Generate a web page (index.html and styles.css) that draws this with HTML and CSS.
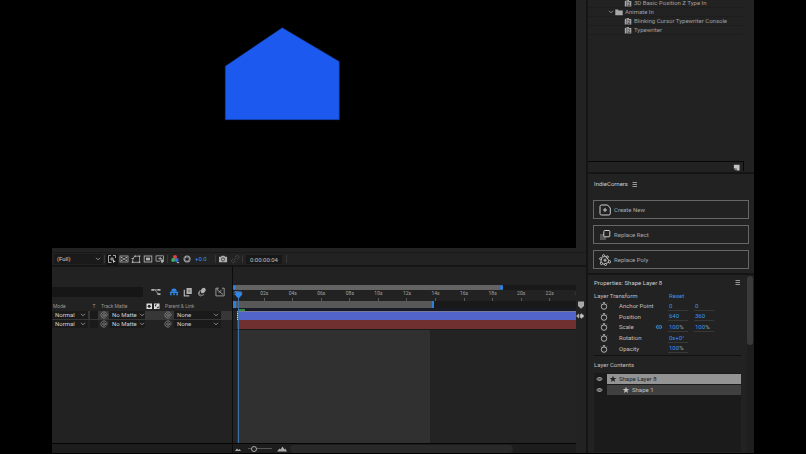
FILE: index.html
```html
<!DOCTYPE html>
<html lang="en">
<head>
<meta charset="utf-8">
<title>Composition</title>
<link rel="stylesheet" href="styles.css">
</head>
<body>
<svg class="defs" aria-hidden="true">
  <symbol id="chev" viewBox="0 0 6 4"><path d="M1 .8l2 2 2-2" fill="none" stroke="currentColor" stroke-width=".8"/></symbol>
  <symbol id="whip" viewBox="0 0 8 8"><path d="M5.3 4a1.3 1.3 0 1 1-1.3-1.3c.8 0 1.3.5 1.3 1.3 0 1.6 2 1.300 1.800-.3C6.900 2 5.600.9 4 .9a3.100 3.100 0 1 0 1.800 5.600" fill="none" stroke="currentColor" stroke-width=".8"/></symbol>
  <symbol id="watch" viewBox="0 0 8 8"><circle cx="4" cy="4.600" r="2.700" fill="none" stroke="currentColor" stroke-width=".9"/><path d="M2.800.7h2.400M4 .7v1.300M1 1.700l.9.9M7 1.700l-.9.9" fill="none" stroke="currentColor" stroke-width=".8"/></symbol>
  <symbol id="preset" viewBox="0 0 8 8"><path d="M.8 2.200L2.600 1v6.500H.8zM3.200 1h1.500l.6.900h2v5.600H3.200z" fill="currentColor"/><path d="M4 3.600c1.500-1 2.500.4 1 1.400L4.500 6.700h1.800" fill="none" stroke="#222" stroke-width=".7"/></symbol>
  <symbol id="eye" viewBox="0 0 8 6"><path d="M.8 3C2 .8 6 .8 7.200 3 6 5.200 2 5.200.8 3z" fill="none" stroke="currentColor" stroke-width=".9"/><circle cx="4" cy="3" r="1.100" fill="#1b1b1b" stroke="currentColor" stroke-width=".6"/></symbol>
  <symbol id="star" viewBox="0 0 8 8"><path d="M4 .8l.9 2.200 2.400.1-1.900 1.500.7 2.300L4 5.600 1.900 6.900l.7-2.300L.7 3.100 3.100 3z" fill="currentColor"/></symbol>
  <symbol id="menu" viewBox="0 0 6 6"><path d="M.5 1.500h4.500M.5 3.500h4.500M.5 5.500h4.500" stroke="currentColor" stroke-width=".7"/></symbol>
</svg>
<div class="app">
  <main class="left">
    <section class="stage">
      <svg class="artwork" viewBox="0 0 524 248" role="img" aria-label="Shape layer"><path d="M173.300 66.200L230.300 27.800 287.200 61.600V119.700H173.300z" fill="#1c59ee" stroke="#173fa0" stroke-width=".5"/></svg>
    </section>

    <div class="viewbar">
      <label class="pick resolution"><select aria-label="Resolution"><option>(Full)</option></select><svg class="chev"><use href="#chev"/></svg></label>
      <i class="sep"></i>
      <button class="ico pressed" aria-label="Fast preview"><svg viewBox="0 0 10 10"><path d="M4 1.500H1.500v7h3M6 1.500h2.500V4M3 5h4M5 3v4" fill="none" stroke="currentColor" stroke-width=".8"/><path d="M6 5.500v3.800l1-1.200h1.800z" fill="currentColor"/></svg></button>
      <button class="ico" aria-label="Transparency grid"><svg viewBox="0 0 10 10"><rect x="1" y="2" width="8" height="6" fill="none" stroke="currentColor" stroke-width=".8"/><path d="M2 3h1.500v1.300H2zM6.500 3H8v1.300H6.500zM3.700 4.300h2.600v1.500H3.700zM2 5.800h1.500v1.300H2zM6.500 5.800H8v1.300H6.500z" fill="currentColor"/></svg></button>
      <button class="ico" aria-label="Mask visibility"><svg viewBox="0 0 10 10"><path d="M1.500 8.300C1.700 5 2.500 2.600 4.200 2.200h4.300v6.100z" fill="none" stroke="currentColor" stroke-width=".8"/><path d="M.8 7.500h1.600v1.600H.8zM7.700 7.500h1.600v1.600H7.700zM7.700 1.400h1.600V3H7.700zM3.300 1.400h1.600V3H3.300zM.6 4h2v.9h-2z" fill="currentColor"/></svg></button>
      <button class="ico" aria-label="Region of interest"><svg viewBox="0 0 10 10"><rect x="1.200" y="2" width="7.600" height="6" fill="none" stroke="currentColor" stroke-width=".9"/><rect x="3" y="3.600" width="4" height="2.800" fill="currentColor"/></svg></button>
      <button class="ico" aria-label="Grid and guides"><svg viewBox="0 0 10 10"><path d="M1 1.800h7.500v4M1 1.800v5.400h4M3.200 4.500h4M5.200 2.800v4" fill="none" stroke="currentColor" stroke-width=".8"/><path d="M6 5.500h2.800v1.800L7 9.300 6 8z" fill="currentColor"/></svg></button>
      <i class="sep"></i>
      <button class="ico" aria-label="Show channel"><svg viewBox="0 0 10 10"><circle cx="5" cy="3" r="2" fill="#d8453c"/><circle cx="3.200" cy="6" r="2" fill="#3fae5a"/><circle cx="6.600" cy="6" r="2" fill="#3d6fe0"/><path d="M6.500 8h3L8 9.500z" fill="#bbb"/></svg></button>
      <button class="ico" aria-label="Reset exposure"><svg viewBox="0 0 10 10"><circle cx="5" cy="5" r="2.700" fill="none" stroke="currentColor" stroke-width="1.700"/><path d="M3.500 2L6.600 3.200M7 2.800l.2 3.200M8 6L5.500 7.600M5 8.300L3 6M2 6l.6-3" stroke="#222" stroke-width=".4"/></svg></button>
      <button class="value exposure">+0.0</button>
      <i class="sep"></i>
      <button class="ico" aria-label="Take snapshot"><svg viewBox="0 0 10 10"><path d="M1 2.800h2l.8-1.100h2.500l.8 1.100h2v5.500H1z" fill="currentColor"/><circle cx="5" cy="5.400" r="1.600" fill="none" stroke="#222" stroke-width=".7"/></svg></button>
      <button class="ico dim" aria-label="Show snapshot"><svg viewBox="0 0 10 10"><path d="M5 3l1-1c2-1.500 4 .5 2.500 2.300l-1.200 1M5.500 7l-1 1C2.500 9.500.5 7.500 2 5.600l1.300-1M3.600 6.700l3.200-3.200" fill="none" stroke="currentColor" stroke-width="1"/></svg></button>
      <i class="sep"></i>
      <input class="timecode" aria-label="Current time" value="0:00:00:04">
      <i class="sep"></i>
    </div>

    <section class="timeline">
      <div class="layers">
        <div class="tools">
          <input class="search" type="search" aria-label="Search layers">
          <button class="ico first" aria-label="Mini-flowchart"><svg viewBox="0 0 10 10"><path d="M2 2.800h5.500M4 2.800l3.500 4.500" fill="none" stroke="currentColor" stroke-width=".8"/><path d="M.3 2h3v1.700h-3zM6.500 2h3v1.700h-3zM6.500 6.300h3V8h-3z" fill="currentColor"/></svg></button>
          <button class="ico on apart" aria-label="Hide shy layers"><svg viewBox="0 0 10 10"><path d="M2.300 4.500a2.700 3 0 0 1 5.400 0zM.7 4.700h8.600v1.400H.7zM1 6.300h1.700V8.300H1zM4.200 6.300h1.600V8.300H4.200zM7.300 6.300H9V8.300H7.300z" fill="currentColor"/></svg></button>
          <button class="ico" aria-label="Frame blending"><svg viewBox="0 0 10 10"><path d="M3.500 1h5.300v6H3.500z" fill="currentColor"/><path d="M1.300 2.800v6h5" fill="none" stroke="currentColor" stroke-width="1.200"/><path d="M5 3.200h2.200M5 4.700h2.200" stroke="#333" stroke-width=".5"/></svg></button>
          <button class="ico" aria-label="Motion blur"><svg viewBox="0 0 10 10"><ellipse cx="6.200" cy="3.600" rx="2.100" ry="2.900" transform="rotate(38 6.200 3.600)" fill="currentColor"/><path d="M3.500 3C1.600 5 2 7.500 4 8.300 5.300 8.600 6.600 8 7.300 7M2.200 4.500C.8 6.500 1.700 8.800 3.700 9.200" fill="none" stroke="currentColor" stroke-width=".8"/></svg></button>
          <button class="ico apart" aria-label="Graph editor"><svg viewBox="0 0 10 10"><path d="M3.500 1.200H.9v7.700h8.300V1.200H7M2 2.500l6 5M1.500 2.800l2-1.700M3.700 5.800l3-3" fill="none" stroke="currentColor" stroke-width=".8"/></svg></button>
        </div>
        <div class="heads">
          <span class="h-mode">Mode</span><span class="h-t">T</span><span class="h-matte">Track Matte</span>
          <span class="h-icons"><svg viewBox="0 0 14 7"><rect x=".5" y=".5" width="5.500" height="5.500" fill="#ddd"/><circle cx="3.200" cy="3.200" r="1.500" fill="#222"/><rect x="8" y=".5" width="5.500" height="5.500" fill="#ddd"/><path d="M9 1.500h2L9 4zM12.600 3v2.200h-2.300z" fill="#222"/></svg></span>
          <span class="h-parent">Parent &amp; Link</span>
        </div>
        <div class="layer selected">
          <label class="pick c-mode"><select aria-label="Blend mode, layer 1"><option>Normal</option></select><svg class="chev"><use href="#chev"/></svg></label>
          <span class="c-t"></span>
          <button class="whip c-w1" aria-label="Matte pick whip"><svg><use href="#whip"/></svg></button>
          <label class="pick c-matte"><select aria-label="Track matte, layer 1"><option>No Matte</option></select><svg class="chev"><use href="#chev"/></svg></label>
          <button class="whip c-w2" aria-label="Parent pick whip"><svg><use href="#whip"/></svg></button>
          <label class="pick c-parent"><select aria-label="Parent, layer 1"><option>None</option></select><svg class="chev"><use href="#chev"/></svg></label>
        </div>
        <div class="layer">
          <label class="pick c-mode"><select aria-label="Blend mode, layer 2"><option>Normal</option></select><svg class="chev"><use href="#chev"/></svg></label>
          <span class="c-t"></span>
          <button class="whip c-w1" aria-label="Matte pick whip"><svg><use href="#whip"/></svg></button>
          <label class="pick c-matte"><select aria-label="Track matte, layer 2"><option>No Matte</option></select><svg class="chev"><use href="#chev"/></svg></label>
          <button class="whip c-w2" aria-label="Parent pick whip"><svg><use href="#whip"/></svg></button>
          <label class="pick c-parent"><select aria-label="Parent, layer 2"><option>None</option></select><svg class="chev"><use href="#chev"/></svg></label>
        </div>
        <div class="foot"></div>
      </div>

      <div class="tracks">
        <div class="navigator"><i class="grip"></i><i class="span"></i><i class="grip"></i></div>
        <div class="ruler"><span>:00s</span><span>02s</span><span>04s</span><span>06s</span><span>08s</span><span>10s</span><span>12s</span><span>14s</span><span>16s</span><span>18s</span><span>20s</span><span>22s</span><span class="end">:</span></div>
        <div class="workarea"><i class="grip"></i><i class="span"></i><i class="grip"></i></div>
        <div class="cache"><i></i></div>
        <div class="bar blue"></div>
        <div class="bar red"></div>
        <div class="void"><i></i></div>
        <div class="playhead"><svg viewBox="0 0 7 8"><path d="M.5.500h1.500l1.500 1 1.500-1h1.500v4l-3 3-3-3z" fill="#2f86e6"/></svg></div>
        <div class="foot zoombar">
          <svg class="hill" viewBox="0 0 12 8"><path d="M2 6l2-2.500L5.500 5 6.500 4 8 6z" fill="#aaa"/></svg>
          <input type="range" aria-label="Timeline zoom" min="0" max="100" value="15">
          <svg class="hill" viewBox="0 0 12 8"><path d="M1 6.500l2.500-3 1 1L6.500 1.500 8.500 4.500l.8-1L11 6.500z" fill="#aaa"/></svg>
          <i class="thumb"></i>
        </div>
      </div>

      <div class="gutter">
        <svg viewBox="0 0 10 8"><path d="M2 .5h6v4.500l-3 2.800-3-2.800z" fill="#a8a8a8"/></svg>
        <svg viewBox="0 0 10 8"><path d="M0 4l3-2.500v5z" fill="#a8a8a8"/><path d="M3.500 2.500L6 1v6L3.500 5.500z" fill="#888"/><circle cx="6" cy="4" r="1.800" fill="#c8c8c8"/></svg>
      </div>
    </section>
  </main>

  <aside class="right">
    <section class="effects">
      <ul class="tree">
        <li class="leaf"><svg><use href="#preset"/></svg>3D Basic Position Z Type In</li>
        <li class="folder"><svg class="chev-in"><use href="#chev"/></svg><svg viewBox="0 0 8 8"><path d="M.3 1.500h2.700l.7.900h4v4.800H.3z" fill="currentColor"/></svg>Animate In</li>
        <li class="leaf"><svg><use href="#preset"/></svg>Blinking Cursor Typewriter Console</li>
        <li class="leaf"><svg><use href="#preset"/></svg>Typewriter</li>
      </ul>
      <div class="tree-foot"><button aria-label="New preset"><svg viewBox="0 0 8 8"><path d="M1 .8h6.500v6.700H4V5H1z" fill="#c4c4c4"/><path d="M1 5.500h2.500v2z" fill="#999"/></svg></button></div>
    </section>

    <section class="corners">
      <h2>IndieCorners <svg><use href="#menu"/></svg></h2>
      <button class="action"><svg viewBox="0 0 12 12"><path d="M2.500 1H8.500L11.300 4v5.500a1.500 1.500 0 0 1-1.500 1.500H2.500A1.500 1.500 0 0 1 1 9.500v-7A1.500 1.500 0 0 1 2.500 1z" fill="none" stroke="currentColor"/><path d="M6 4v4M4 6h4" stroke="currentColor"/></svg>Create New</button>
      <button class="action"><svg viewBox="0 0 12 12"><path d="M1 5h6v6H1z" fill="#555"/><rect x="4.800" y="1.500" width="6" height="6.300" rx=".8" fill="#222" stroke="currentColor"/></svg>Replace Rect</button>
      <button class="action"><svg viewBox="0 0 12 12"><path d="M5.500 1.700L9 5l1.500 3L5 10.300 1.800 9 2.500 3.800z" fill="none" stroke="currentColor" stroke-width=".9"/><g fill="#222" stroke="currentColor" stroke-width=".9"><circle cx="4.600" cy="1.700" r="1.100"/><circle cx="1.700" cy="4.700" r="1.100"/><circle cx="2.500" cy="9.500" r="1.100"/><circle cx="10.500" cy="7.800" r="1.200"/><circle cx="8.300" cy="3" r="1.100"/><circle cx="6.500" cy="10.500" r="1"/></g><path d="M6 4.500v3.500M4.300 6.200h3.500" stroke="currentColor" stroke-width=".9"/></svg>Replace Poly</button>
    </section>

    <section class="properties">
      <div class="props">
        <h2>Properties: Shape Layer 8 <svg><use href="#menu"/></svg></h2>
        <div class="grouphead"><span>Layer Transform</span><button class="value">Reset</button></div>
        <div class="transform">
          <svg class="watch"><use href="#watch"/></svg><span class="name">Anchor Point</span><button class="value">0</button><button class="value second">0</button>
          <svg class="watch"><use href="#watch"/></svg><span class="name">Position</span><button class="value">640</button><button class="value second">360</button>
          <svg class="watch"><use href="#watch"/></svg><span class="name">Scale</span><svg class="chain" viewBox="0 0 8 6"><path d="M3.500 4.500H2.300a1.600 1.600 0 0 1 0-3h1.200M4.500 1.500h1.200a1.600 1.600 0 0 1 0 3H4.500M2.500 3h3" fill="none" stroke="#3d8fe0" stroke-width="1"/></svg><button class="value">100<em>%</em></button><button class="value second">100<em>%</em></button>
          <svg class="watch"><use href="#watch"/></svg><span class="name">Rotation</span><button class="value">0x+0°</button>
          <svg class="watch"><use href="#watch"/></svg><span class="name">Opacity</span><button class="value">100<em>%</em></button>
        </div>
        <h3>Layer Contents</h3>
        <div class="contents">
          <div class="item active"><button aria-label="Toggle Shape Layer 8"><svg class="eye"><use href="#eye"/></svg></button><span><svg><use href="#star"/></svg>Shape Layer 8</span></div>
          <div class="item child"><button aria-label="Toggle Shape 1"><svg class="eye"><use href="#eye"/></svg></button><span><svg><use href="#star"/></svg>Shape 1</span></div>
        </div>
      </div>
      <div class="scroll"><i></i></div>
    </section>
  </aside>
</div>
</body>
</html>
```

FILE: styles.css
```css
* { box-sizing: border-box; }

body {
  margin: 0;
  background: #000;
  color: #c0c0c0;
  font: 6px/8px Roboto, "Open Sans", sans-serif;
}

button, input, select {
  margin: 0;
  padding: 0;
  border: 0;
  border-radius: 0;
  background: none;
  color: inherit;
  font: inherit;
  appearance: none;
  outline: 0;
}

h2, h3, ul { margin: 0; padding: 0; font: inherit; list-style: none; }
svg { display: block; flex: none; }
i { display: block; }
.defs { position: absolute; width: 0; height: 0; }

.app {
  display: flex;
  min-height: 100vh;
  padding: 0 52px 1px;
}

.left { flex: 1; min-width: 0; display: flex; flex-direction: column; background: #222; }

.right {
  flex: none;
  width: 168px;
  display: flex;
  flex-direction: column;
  border-left: 2px solid #151515;
  background: #222;
}

/* Viewer */
.stage { flex: 1; margin-right: 10px; background: #000; }
.artwork { width: 100%; }

.viewbar {
  display: flex;
  align-items: center;
  height: 13px;
  margin-top: 4px;
  padding-left: 2px;
  border-top: 1px solid #191919;
}
.sep { width: 1px; height: 8px; margin: 0 1px; background: #363636; }
.ico { display: grid; place-items: center; width: 12px; height: 11px; color: #b0b0b0; }
.ico svg { width: 10px; height: 10px; }
.pressed { background: #141414; color: #ccc; }
.dim { color: #444; }
.on { color: #2f86e6; }
.value { color: #3d94ea; text-align: left; }
.exposure { width: 21px; padding-left: 2px; }
.timecode { width: 36px; height: 9px; margin: 0 3px 0 2px; background: #181818; text-align: center; }

.pick { position: relative; display: block; background: #1a1a1a; }
.pick select { display: block; width: 100%; height: 100%; padding-left: 3px; color: #d0d0d0; }
.chev { position: absolute; right: 2px; top: 50%; width: 6px; height: 4px; margin-top: -2px; color: #aaa; pointer-events: none; }
.resolution { width: 49px; height: 10px; }

/* Timeline */
.timeline { display: flex; height: 188px; border-top: 2px solid #151515; }
.layers { width: 180px; display: flex; flex-direction: column; padding-top: 19px; }
.tools { display: flex; align-items: center; height: 11px; margin-bottom: 4px; }
.tools .ico { width: 14px; }
.tools .first { margin-left: 6px; }
.tools .apart { margin-left: 4px; }
.search { width: 91px; height: 10px; background: #161616; }

.heads, .layer {
  display: grid;
  grid-template-columns: 36px 2px 8px 11px 36px 17px 12px 47px 11px;
}
.heads { height: 10px; align-items: center; color: #969696; font-size: 5px; }
.h-mode { grid-column: 1; padding-left: 1px; }
.h-t { grid-column: 3; text-align: center; }
.h-matte { grid-column: 4 / 6; padding-left: 3px; }
.h-icons { grid-column: 6; padding-left: 1px; }
.h-icons svg { width: 14px; height: 7px; }
.h-parent { grid-column: 7 / 9; padding-left: 3px; }

.layer { height: 9px; }
.layer > * { height: 8px; }
.selected { background: #373737; }
.c-mode { grid-column: 1; }
.c-t { grid-column: 3; background: #1a1a1a; }
.c-w1 { grid-column: 4; }
.c-matte { grid-column: 5; }
.c-w2 { grid-column: 7; }
.c-parent { grid-column: 8; }
.c-matte .chev { right: 0; }
.whip { display: grid; place-items: center; color: #8c8c8c; }
.whip svg { width: 8px; height: 8px; }

.foot { height: 10px; margin-top: auto; border-top: 1px solid #050505; background: #1d1d1d; }

.tracks {
  position: relative;
  flex: 1;
  min-width: 0;
  display: flex;
  flex-direction: column;
  padding-top: 18px;
  border-left: 1px solid #0c0c0c;
}
.navigator, .workarea { display: flex; background: #191919; }
.navigator { height: 5px; }
.workarea { height: 7px; }
.grip { width: 3px; background: #2f7fd8; }
.grip:last-child { width: 2px; }
.navigator .grip { width: 3px; border-radius: 1px; }
.navigator .span { width: 77%; background: #636363; }
.workarea .span { width: 57%; background: #585858; }

.ruler {
  display: grid;
  grid-template-columns: 17px repeat(11, 1fr) 12px;
  height: 11px;
  color: #a5a5a5;
  font-size: 5px;
  line-height: 7px;
  text-align: center;
}
.ruler span::after { content: ""; display: block; width: 1px; height: 3px; margin: 1px auto 0; background: #5c5c5c; }
.ruler span:first-child { text-align: left; }
.ruler span:first-child::after, .ruler .end::after { display: none; }
.ruler .end { text-align: right; }

.cache { height: 3px; padding: 1px 0 0 6px; background: #181a28; }
.cache i { width: 6px; height: 2px; background: #2e8a3e; }
.bar { height: 9px; margin-left: 4px; }
.blue { border-top: 1px solid #777a96; border-left: 1px dotted #ccc; background: #5263c9; }
.red { background: #6f302f; }
.void { flex: 1; display: flex; padding-left: 4px; border-top: 1px solid #191919; background: #232323; }
.void i { width: 57%; background: #303030; }

.playhead { position: absolute; left: 5px; top: 24px; bottom: 10px; width: 1px; background: #3f6fa8; }
.playhead svg { width: 7px; height: 8px; margin-left: -3px; }

.zoombar { display: flex; align-items: center; }
.hill { width: 12px; height: 8px; }
.zoombar input { width: 24px; height: 8px; margin: 0 4px 0 3px; background: linear-gradient(#555, #555) center / 100% 1px no-repeat; }
.zoombar input::-webkit-slider-thumb { appearance: none; width: 6px; height: 6px; border: 1px solid #aaa; border-radius: 3px; background: #1d1d1d; }
.thumb { width: 65%; height: 8px; margin-left: 2px; border-radius: 4px; background: #292929; }

.gutter { width: 10px; padding-top: 34px; }
.gutter svg { width: 10px; height: 8px; margin-bottom: 3px; }

/* Effects tree */
.effects { margin-bottom: 1px; }
.tree { height: 161px; margin-right: 11px; overflow: hidden; }
.tree li { display: flex; align-items: center; height: 9px; border-bottom: 1px solid #1d1d1d; color: #a0a0a0; }
.tree li:first-child { margin-top: -1px; }
.tree svg { width: 8px; height: 8px; margin-right: 2px; color: #a8a8a8; }
.leaf { padding-left: 36px; }
.folder { padding-left: 20px; }
.tree .chev-in { width: 6px; height: 4px; margin-right: 1px; }
.tree-foot { display: flex; justify-content: flex-end; height: 10px; margin-right: 10px; padding: 1px 3px 0; border: 1px solid #080808; border-width: 1px 1px 0 0; }
.tree-foot svg { width: 7px; height: 7px; }

/* Corner tools */
.corners { padding: 6px 5px 4px; border-top: 2px solid #151515; }
.corners h2 { display: flex; align-items: center; height: 8px; margin-bottom: 12px; padding-left: 1px; color: #ccc; }
.corners h2 svg { width: 6px; height: 6px; margin-left: 4px; }
.action { display: flex; align-items: center; width: 100%; height: 19px; margin-bottom: 6px; padding-left: 5px; border: 1px solid #666; color: #a8a8a8; }
.action:last-child { margin-bottom: 0; }
.action svg { width: 12px; height: 12px; margin-right: 3px; color: #ccc; }

/* Properties */
.properties { flex: 1; display: flex; border-top: 2px solid #151515; }
.props { flex: 1; display: flex; flex-direction: column; padding: 4px 6px 1px; }
.props h2 { display: flex; justify-content: space-between; height: 8px; margin-bottom: 5px; color: #ccc; }
.props h2 svg { width: 6px; height: 6px; }
.grouphead { display: grid; grid-template-columns: 75px 1fr; height: 8px; margin-bottom: 1px; }
.transform {
  display: grid;
  grid-template-columns: 19px 6px 36px 13px 20px 6px 20px;
  grid-auto-rows: 1fr;
  height: 53px;
  align-items: center;
}
.watch { grid-column: 1; width: 8px; height: 8px; margin-left: 6px; }
.name { grid-column: 2 / 4; margin-left: 6px; }
.chain { grid-column: 4; width: 8px; height: 6px; }
.transform .value { grid-column: 5; height: 9px; padding-left: 1px; border-bottom: 1px solid #383838; white-space: nowrap; }
.transform .second { grid-column: 7; }
.value em { color: #a5a5a5; font-style: normal; }
.props h3 { height: 18px; margin-top: 1px; padding-top: 5px; border-top: 1px solid #111; }
.contents { flex: 1; width: 100%; background: #1b1b1b; }
.item { display: grid; grid-template-columns: 13px 1fr; height: 11px; align-items: center; }
.item .eye { width: 7px; height: 6px; margin-left: 2px; color: #ccc; }
.item span { display: flex; align-items: center; height: 10px; padding-left: 2px; background: #404040; }
.item span svg { width: 8px; height: 8px; margin-right: 2px; }
.item.active span { background: #949494; color: #222; }
.item.child span { padding-left: 15px; }
.scroll { width: 7px; padding-top: 1px; background: #1e1e1e; }
.scroll i { width: 6px; height: 69px; border-radius: 3px; background: #3a3a3a; }
```
